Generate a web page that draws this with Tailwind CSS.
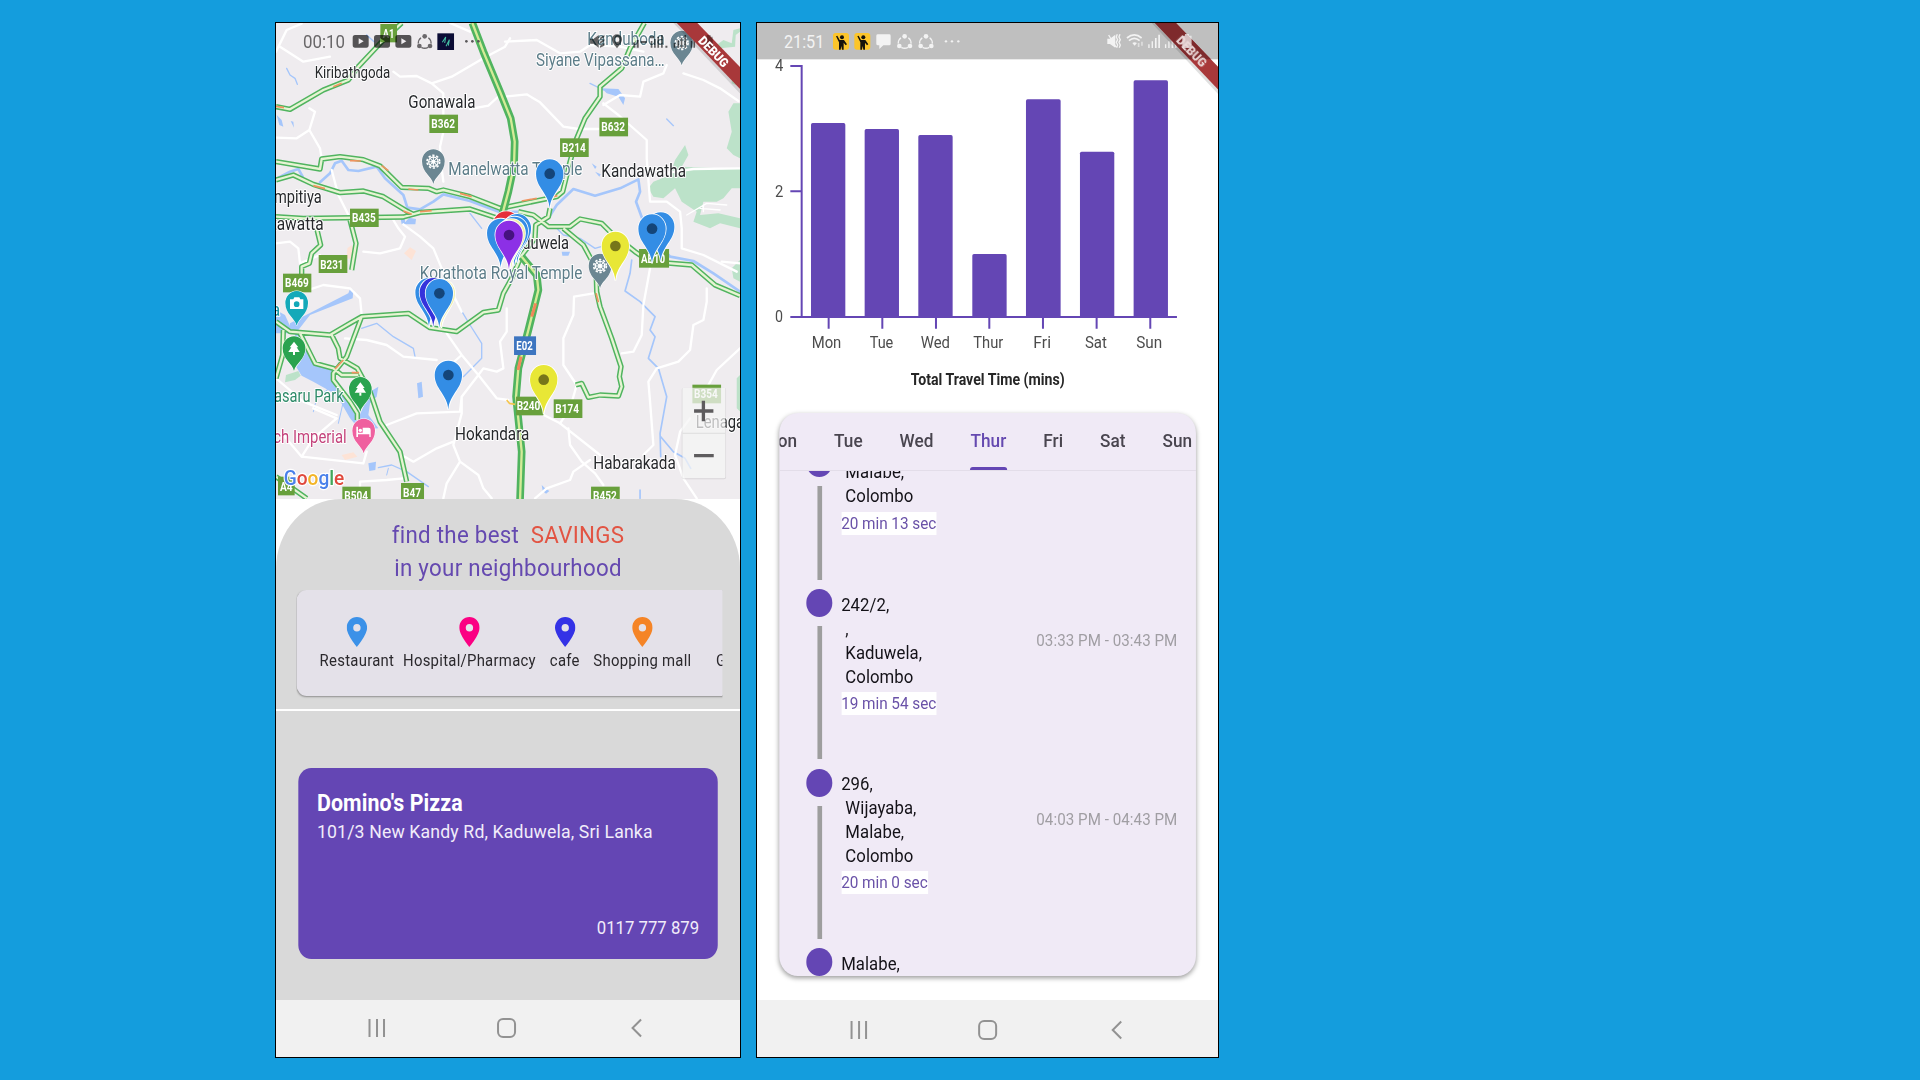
<!DOCTYPE html>
<html lang="en">
<head>
<meta charset="utf-8">
<title>Travel app screens</title>
<script src="https://cdn.jsdelivr.net/npm/@tailwindcss/browser@4"></script>
</head>
<body class="h-[1080px] w-[1920px] overflow-hidden bg-[#149ddd] font-[Roboto,sans-serif]">
<svg class="hidden">
  <defs>
    <path id="marker" d="M0 4C-3 -42 -41 -58 -41 -100A41 43 0 1 1 41 -100C41 -58 3 -42 0 4Z"/>
    <path id="poi" d="M0 0C-4 -22 -34 -34 -34 -68A34 36 0 1 1 34 -68C34 -34 4 -22 0 0Z"/>
    <g id="wheel" fill="none" stroke="#fff" stroke-width="4"><circle r="14"/><circle r="19" stroke-dasharray="7 5" stroke-width="5"/><circle r="4"/><path d="M-16 0H16M0 -16V16M-11 -11L11 11M-11 11L11 -11" stroke-width="3"/></g>
    <g id="tree" fill="#fff"><path d="M0 -23L13 -6H8L17 8H-17L-8 -6H-13Z"/><path d="M-3 8H3V17H-3Z"/></g>
    <path id="tube" fill-rule="evenodd" d="M7 0H41Q48 0 48 8V30Q48 38 41 38H7Q0 38 0 30V8Q0 0 7 0ZM18 10V28L33 19Z"/>
    <g id="share"><path d="M12 10A20 20 0 0 0 4 28M34 10A20 20 0 0 1 42 28M13 39A20 20 0 0 0 33 39" fill="none" stroke="currentColor" stroke-width="4"/><circle cx="23" cy="6" r="7" fill="currentColor"/><circle cx="7" cy="35" r="7" fill="currentColor"/><circle cx="39" cy="35" r="7" fill="currentColor"/></g>
    <path id="small-pin" fill-rule="evenodd" d="M10 0C4.500 0 0 4.700 0 10.500C0 18 10 30 10 30S20 18 20 10.500C20 4.700 15.500 0 10 0ZM10 7A3.600 3.800 0 1 1 10 14.600A3.600 3.800 0 1 1 10 7Z"/>
    <g id="yellow-app"><rect width="48" height="50" rx="8" fill="#fcc52b"/><circle cx="27" cy="13" r="6" fill="#15120c"/><path d="M9 10L13 8L20 21H33L42 34L38 37L32 29V50H27L25 39L23 50H18V28Z" fill="#15120c"/></g>
    <path id="roads" d="M395 24L340 75L265 155L235 195L160 225L60 283L18 275M18 440L150 462L155 432L210 425L280 434L330 453L395 517L475 520L500 530L520 525L600 545L690 580L860 545L878 530L900 440L920 370L945 310L990 245V215L1055 160L1080 100L1123 24M18 495L70 480L130 508L210 533L280 528L340 545L410 588L430 598M18 605L100 610L400 606L450 592L600 582L690 612M240 615L258 685L245 765M140 640L152 690L125 715L118 745L95 755V780M745 590L790 600L835 635L900 635L930 612L995 625L1025 655L1095 710L1140 740L1265 750L1335 810L1410 842M840 580L835 605L797 630L795 670L740 740M880 640L940 690L978 760L980 830L990 875L1025 970L1053 1055L1048 1085L1055 1115L1045 1143L990 1140L955 1147L935 1105L917 1110M18 920L60 950L180 960L240 925L275 905L415 895L480 938L560 950L640 892L685 885L700 835L725 790L755 720M275 905L230 1025L190 1075V1095L240 1160L262 1195V1215M185 960L205 1000L210 1030L262 1060L300 1130L330 1220L390 1310L410 1400M90 955L135 1045L190 1060L215 1080H265M40 945L38 1020L18 1090M18 1385L110 1450"/>
    <path id="motorway" d="M607 24L640 110L690 230L722 310L734 380L732 450L715 530L695 605M755 725L800 780L805 825L775 945L745 1060L738 1145L755 1310L750 1455"/>
  </defs>
</svg>
<main class="flex gap-[15px] pt-[22px] pl-[275px]">

<!-- Map screen -->
<section class="h-[1036px] w-[466px] shrink-0 overflow-hidden border border-black bg-white">
<div class="flex h-full w-[499px] origin-left scale-x-[.93] flex-col">
<svg class="block h-[476px] w-full shrink-0" viewBox="18 24 1392 1428" preserveAspectRatio="none">
  <rect x="18" y="24" width="1392" height="1428" fill="#efecef"/>
  <g fill="#bce2c9">
    <path d="M1375 290L1390 265H1410V430L1390 420L1370 400L1385 350Z"/>
    <path d="M1135 520L1150 500L1200 480L1215 435L1245 390L1255 420L1235 455L1410 462V520L1385 520L1360 550L1340 560L1300 560L1290 600L1345 595L1410 610V640L1350 625L1320 640L1270 620L1280 590L1235 560L1215 520L1180 550L1150 545Z"/>
    <path d="M1340 90L1360 75L1385 85L1390 45L1410 40V50L1397 60L1395 95L1350 100Z"/>
    <path d="M1385 190L1410 175V215L1385 205Z"/>
    <path d="M1385 760L1410 735V800L1390 790Z"/><path d="M1400 1090L1410 1080V1190L1400 1180Z"/>
    <path d="M48 1080L85 1068L92 1082L75 1095L45 1102Z"/>
  </g>
  <g fill="#fde3d6"><path d="M232 700L245 690L258 735L230 730Z"/><path d="M402 715L420 697L438 708L425 735Z"/><path d="M215 1320L250 1312L262 1325L225 1335Z"/></g>
  <g fill="#a5c6fb">
    <path d="M60 925L235 835L240 822L250 825L248 850L120 900L85 945L60 945Z"/>
    <path d="M18 885L45 900L70 955H18Z"/>
    <path d="M75 955L100 955L135 1045L200 1065L195 1090L245 1160L265 1210L300 1130L325 1115L320 1145L300 1165L295 1200L325 1240L270 1245L240 1210L200 1140L165 1120L130 1100L95 1082L72 1045Z"/>
    <path d="M441 1105L455 1100L459 1145L445 1150Z"/><path d="M295 1345L318 1340L316 1365L298 1368Z"/>
    <path d="M20 300L35 315L40 335L28 330ZM62 318L70 320L72 338ZM392 612L405 612V622L418 608L438 612L436 628L395 628Z"/>
    <path d="M875 710H900L895 722L877 722ZM815 1410L825 1420L838 1428L828 1436L818 1428ZM965 445L980 455L975 462ZM975 470L992 478L988 485ZM995 220L1045 222L1065 250L1060 270L1045 245L1010 235Z"/>
  </g>
  <g fill="none" stroke="#a5c6fb" stroke-linejoin="round" stroke-linecap="round">
    <path stroke-width="8" d="M18 492L60 470L85 462L98 485M150 502L180 475L195 445L215 437L235 465L265 468L320 455L345 490L400 540L412 578L450 583L490 560L520 538L600 558L690 592L760 590L810 615L835 610L860 570L910 522L975 542L1050 520L1105 493L1110 530L1098 560L1120 620L1160 680L1200 725L1270 738L1330 775L1410 830"/>
    <path stroke-width="4" d="M50 160L60 180L75 190L82 208M600 595L635 640M1190 312L1210 332M960 205L1000 225M860 640L880 660L930 670L975 700L1010 690M275 940L320 925L370 965L430 1000L435 1025M570 880L600 930L635 985V1030L580 1085M325 1358L365 1350L410 1370L475 1415M290 60L312 80"/>
    <path stroke-width="5" d="M1085 735L1080 775L1065 828L1110 860L1155 905L1140 945L1155 965L1135 1030L1165 1060L1190 1145L1170 1255L1172 1325M1172 1265L1210 1310L1245 1330L1262 1360M1110 1425V1450"/>
    <path stroke-width="3" d="M190 1110L140 1150L130 1190M220 1160L205 1225M350 1380L355 1360"/>
  </g>
  <g fill="none" stroke="#fff" stroke-width="7" stroke-linejoin="round" stroke-linecap="round">
    <path d="M18 110L50 45L95 26M30 95L100 140L180 125M370 170L390 185L440 183L485 205L545 185L640 130L705 95L720 70M485 205L520 235V300M520 350L510 395L515 460L520 500"/>
    <path d="M600 282L655 272L690 240M705 245L770 238L810 262L880 335L925 342L985 342M540 24L600 50M118 280L135 290L118 345L80 370L18 368M118 345L150 400L155 430"/>
    <path d="M185 465L205 540L240 610M370 615L385 640L405 665L390 700L330 715L280 710M400 628L450 665L490 700L515 760L530 800L575 890M18 685L60 680L85 700L90 745L150 720"/>
    <path d="M705 80L800 75L870 115L930 110L960 90L1050 95L1120 110M1000 270L1050 240L1110 245L1120 200L1180 175L1190 150M1000 265L1045 300L1130 375V430L1140 560L1190 560L1230 590L1235 640L1235 700L1300 720L1400 770M1240 175L1300 195L1350 220L1405 258M1180 475L1270 462L1410 460"/>
    <path d="M1410 745L1355 740M1310 820L1310 860L1300 915L1270 930L1260 1005L1225 1040L1160 1060L1135 1100L1140 1160L1150 1290L1120 1320M1140 760L1120 870L1115 960L1090 1010L1055 1015M970 835L912 845L910 900L880 970V1050L920 1110L900 1180L870 1225M1410 1000L1340 1065L1315 1110M1260 1210L1230 1250L1215 1320L1240 1390L1280 1450"/>
    <path d="M100 830L160 810L240 820L270 850L275 900M225 970L290 975L350 990L400 1025L500 1035M530 955L575 1020L625 1080L680 1150L715 1155M575 1020L530 1060M625 1080L640 1060L680 1070L700 1060L690 980L710 950V880M625 1080L575 1145L570 1190L440 1195L350 1230M575 1145V1195L550 1290L570 1340L625 1380L640 1420L665 1450M570 1340L530 1405L520 1450M550 1280L500 1300L430 1340L395 1320M130 1180L200 1210L130 1270L95 1325L280 1345L290 1310M270 1400L350 1395L400 1390M270 1400V1450M95 1325L40 1260M18 1090L100 1160L200 1200M821 1200L870 1225L990 1320M895 1240L900 1290L935 1340L975 1375L1000 1410M960 1335L910 1370L900 1395L830 1420L795 1450"/>
    <path stroke-width="4" d="M1250 600L1310 565L1370 570M1300 590V570M1290 580L1350 585"/>
  </g>

  <!-- Traffic roads: green casing, pale core, coloured traffic segments -->
  <g fill="none" stroke-linejoin="round">
    <use href="#roads" stroke="#50b45f" stroke-width="16"/>
    <use href="#roads" stroke="#e6f4d3" stroke-width="7"/>
    <use href="#motorway" stroke="#50b45f" stroke-width="23"/>
    <use href="#motorway" stroke="#d5eb98" stroke-width="7"/>
    <path stroke="#f2875b" stroke-width="9" d="M797 865L785 905M753 1025L744 1065"/>
    <path stroke="#f0935f" stroke-width="5" d="M240 437L272 438M335 452L355 467M415 522L445 525M570 535L605 545M755 558L800 550M840 548L862 542M130 512L165 521M400 588L425 598M450 590L485 587M978 835L985 862M195 1062L220 1035M245 1073L267 1073M190 215L215 205M18 274L42 278"/>
    <path stroke="#f5c64f" stroke-width="5" d="M710 1155L718 1165L735 1168"/>
  </g>

  <!-- Route badges -->
  <g fill="#68a03c">
    <rect x="331" y="27" width="50" height="55"/><rect x="478" y="299" width="86" height="55"/><rect x="988" y="308" width="86" height="56"/><rect x="870" y="370" width="86" height="56"/>
    <rect x="240" y="581" width="86" height="55"/><rect x="146" y="720" width="86" height="54"/><rect x="39" y="776" width="85" height="56"/><rect x="1107" y="702" width="90" height="56"/>
    <rect x="738" y="1145" width="82" height="56"/><rect x="851" y="1153" width="86" height="56"/><rect x="1267" y="1109" width="86" height="56"/>
    <rect x="24" y="1385" width="50" height="56"/><rect x="217" y="1415" width="85" height="40"/><rect x="393" y="1404" width="69" height="56"/><rect x="963" y="1415" width="86" height="40"/>
  </g>
  <rect x="732" y="964" width="66" height="56" fill="#3d75c0"/>
  <g fill="#fff" font-size="36" font-weight="700">
    <text x="338" y="68" textLength="35" lengthAdjust="spacingAndGlyphs">A1</text>
    <text x="484" y="339" textLength="71" lengthAdjust="spacingAndGlyphs">B362</text>
    <text x="994" y="349" textLength="71" lengthAdjust="spacingAndGlyphs">B632</text>
    <text x="876" y="410" textLength="71" lengthAdjust="spacingAndGlyphs">B214</text>
    <text x="246" y="621" textLength="71" lengthAdjust="spacingAndGlyphs">B435</text>
    <text x="151" y="761" textLength="69" lengthAdjust="spacingAndGlyphs">B231</text>
    <text x="45" y="817" textLength="71" lengthAdjust="spacingAndGlyphs">B469</text>
    <text x="1113" y="743" textLength="72" lengthAdjust="spacingAndGlyphs">AB10</text>
    <text x="740" y="1186" textLength="71" lengthAdjust="spacingAndGlyphs">B240</text>
    <text x="856" y="1194" textLength="71" lengthAdjust="spacingAndGlyphs">B174</text>
    <text x="1272" y="1150" textLength="71" lengthAdjust="spacingAndGlyphs">B354</text>
    <text x="30" y="1427" textLength="38" lengthAdjust="spacingAndGlyphs">A4</text>
    <text x="223" y="1456" textLength="71" lengthAdjust="spacingAndGlyphs">B504</text>
    <text x="399" y="1445" textLength="54" lengthAdjust="spacingAndGlyphs">B47</text>
    <text x="969" y="1456" textLength="71" lengthAdjust="spacingAndGlyphs">B452</text>
    <text x="739" y="1004" textLength="49" lengthAdjust="spacingAndGlyphs">E02</text>
  </g>

  <!-- Place names -->
  <g fill="#26282b" font-size="53" stroke="#fff" stroke-width="6" stroke-linejoin="round" paint-order="stroke">
    <text x="134" y="188" font-size="48" textLength="227" lengthAdjust="spacingAndGlyphs">Kiribathgoda</text>
    <text x="415" y="278" textLength="201" lengthAdjust="spacingAndGlyphs">Gonawala</text>
    <text x="994" y="485" textLength="254" lengthAdjust="spacingAndGlyphs">Kandawatha</text>
    <text x="12" y="564" textLength="143" lengthAdjust="spacingAndGlyphs">mpitiya</text>
    <text x="5" y="645" textLength="156" lengthAdjust="spacingAndGlyphs">tawatta</text>
    <text x="705" y="702" textLength="192" lengthAdjust="spacingAndGlyphs">Kaduwela</text>
    <text x="555" y="1275" textLength="223" lengthAdjust="spacingAndGlyphs">Hokandara</text>
    <text x="970" y="1363" textLength="247" lengthAdjust="spacingAndGlyphs">Habarakada</text>
    <text x="1277" y="1239" textLength="145" lengthAdjust="spacingAndGlyphs">Lenaga</text>
    <g fill="#5d7d89">
      <text x="535" y="479" textLength="402" lengthAdjust="spacingAndGlyphs">Manelwatta Temple</text>
      <text x="449" y="791" textLength="488" lengthAdjust="spacingAndGlyphs">Korathota Royal Temple</text>
      <text x="952" y="91" textLength="232" lengthAdjust="spacingAndGlyphs">Kanduboda</text>
      <text x="798" y="152" textLength="386" lengthAdjust="spacingAndGlyphs">Siyane Vipassana…</text>
    </g>
    <text x="12" y="1160" textLength="209" fill="#2d8a68" lengthAdjust="spacingAndGlyphs">asaru Park</text>
    <text x="2" y="902" fill="#1995a5">a</text>
    <text x="10" y="1284" textLength="220" fill="#c4447c" lengthAdjust="spacingAndGlyphs">ch Imperial</text>
  </g>

  <!-- Points of interest -->
  <g fill="#6b8692" stroke="#fff" stroke-width="3" paint-order="stroke">
    <use href="#poi" x="490" y="507"/><use href="#poi" x="1235" y="151"/><use href="#poi" x="990" y="820"/>
    <use href="#poi" x="80" y="932" fill="#14a9b9"/><use href="#poi" x="72" y="1068" fill="#2aa34f"/><use href="#poi" x="271" y="1190" fill="#2aa34f"/><use href="#poi" x="281" y="1315" fill="#ef609f"/>
  </g>
  <use href="#wheel" x="490" y="440"/><use href="#wheel" x="1235" y="84"/><use href="#wheel" x="990" y="753"/>
  <use href="#tree" x="72" y="1003"/><use href="#tree" x="271" y="1125"/>
  <path fill="#fff" fill-rule="evenodd" d="M60 853H70L73 847H88L91 853H100V882H60ZM80 859A8 8 0 1 0 80 876A8 8 0 1 0 80 859Z"/>
  <path fill="#fff" d="M259 1235H264V1253H278V1238H296Q302 1238 302 1245V1266H298V1258H264V1266H259Z"/><circle cx="271" cy="1246" r="5" fill="#fff"/>

  <!-- Result markers -->
  <g stroke="#fff" stroke-width="5" paint-order="stroke">
    <use href="#marker" x="1172" y="735" fill="#338de5"/><use href="#marker" x="1146" y="741" fill="#338de5"/>
    <use href="#marker" x="839" y="576" fill="#338de5"/><use href="#marker" x="1036" y="793" fill="#e8e736"/>
    <use href="#marker" x="709" y="732" fill="#e6303b"/><use href="#marker" x="692" y="754" fill="#338de5"/><use href="#marker" x="742" y="740" fill="#338de5"/><use href="#marker" x="733" y="748" fill="#338de5"/><use href="#marker" x="724" y="755" fill="#f1eda8"/><use href="#marker" x="717" y="760" fill="#8c30e6"/>
    <use href="#marker" x="477" y="932" fill="#338de5"/><use href="#marker" x="490" y="932" fill="#3532dc"/><use href="#marker" x="514" y="935" fill="#eff0ae"/><use href="#marker" x="508" y="935" fill="#338de5"/>
    <use href="#marker" x="535" y="1180" fill="#338de5"/><use href="#marker" x="821" y="1193" fill="#e8e736"/>
  </g>
  <g fill="#144579"><circle cx="1146" cy="641" r="16"/><circle cx="839" cy="476" r="16"/><circle cx="508" cy="835" r="16"/><circle cx="535" cy="1080" r="16"/><circle cx="1036" cy="693" r="16" fill="#77761a"/><circle cx="821" cy="1094" r="16" fill="#77761a"/><circle cx="717" cy="660" r="16" fill="#46127f"/></g>

  <!-- Zoom buttons -->
  <rect x="1235" y="1118" width="133" height="275" rx="6" fill="#00000018"/>
  <rect x="1237" y="1118" width="129" height="272" rx="4" fill="#fff" fill-opacity=".7"/>
  <path d="M1237 1255H1366" stroke="#ddd" stroke-width="3"/>
  <path d="M1272 1188H1330M1300 1157V1219M1272 1322H1331" stroke="#5e5c5e" stroke-width="10"/>

  <text x="41" y="1410" font-size="62" font-weight="500" textLength="182" lengthAdjust="spacingAndGlyphs" stroke="#fff" stroke-width="7" stroke-linejoin="round" paint-order="stroke"><tspan fill="#4a80ea">G</tspan><tspan fill="#e04a3e">o</tspan><tspan fill="#f3b528">o</tspan><tspan fill="#4a80ea">g</tspan><tspan fill="#41a65a">l</tspan><tspan fill="#e04a3e">e</tspan></text>

  <!-- Status bar -->
  <text x="99" y="100" font-size="54" textLength="126" lengthAdjust="spacingAndGlyphs" fill="#696769">00:10</text>
  <g fill="#000" fill-opacity=".65"><use href="#tube" x="248" y="60"/><use href="#tube" x="312" y="60"/><use href="#tube" x="376" y="60"/></g>
  <use href="#share" x="441" y="58" class="text-[#6b686b]"/>
  <rect x="502" y="55" width="50" height="50" fill="#0b0c35"/><path d="M517 82L527 66L524 84M528 94L538 74L535 92" fill="none" stroke="#45c3a6" stroke-width="3"/>
  <g fill="#5a585a"><circle cx="589" cy="79" r="4"/><circle cx="607" cy="79" r="4"/><circle cx="625" cy="79" r="4"/></g>
  <g fill="#000" fill-opacity=".6">
    <path d="M960 72H970L986 60V98L970 86H960ZM990 68L1003 60V66L990 74ZM990 80L1003 72V78L990 86ZM990 92L1003 84V92L990 98Z"/>
    <path fill-rule="evenodd" d="M1041 58A15 15 0 0 1 1056 73C1056 84 1041 100 1041 100S1026 84 1026 73A15 15 0 0 1 1041 58ZM1041 67A7 7 0 1 0 1041 81A7 7 0 1 0 1041 67Z"/>
    <path d="M1090 82H1096V98H1090ZM1100 75H1106V98H1100ZM1112 78H1130V84H1112ZM1140 64H1152V70H1140ZM1142 78H1147V98H1142ZM1152 72H1157V98H1152ZM1162 65H1167V98H1162ZM1173 60H1178V98H1173ZM1186 92H1192V98H1186ZM1211 84H1216V98H1211ZM1222 76H1227V98H1222ZM1232 68H1237V98H1232ZM1243 60H1248V98H1243ZM1262 78H1266V98H1262ZM1270 70H1275V98H1270Z"/>
  </g>
  <path d="M1210 24L1410 236V222L1220 24Z" fill="#000" opacity=".12"/>
  <path d="M1220 24H1282L1410 156V222Z" fill="#a8383a"/>
  <path d="M1304 65H1310V60H1322V65H1328V99H1304Z" fill="#000" fill-opacity=".35"/>
  <text transform="translate(1321 119) rotate(46)" text-anchor="middle" font-size="38" font-weight="900" fill="#fff" textLength="112" lengthAdjust="spacingAndGlyphs">DEBUG</text>
</svg>

<div class="h-[210px] shrink-0 rounded-t-[70px] bg-[#d9d9d9]">
  <div class="pt-[20px] text-center text-[24px] leading-[33.300px] tracking-[.3px] text-[#6549b0]">
    <p>find the best&nbsp; <span class="text-[#e25443]">SAVINGS</span></p>
    <p>in your neighbourhood</p>
  </div>
  <div class="mt-[4px] ml-[22px] w-[458px] overflow-hidden pb-2">
    <ul class="flex h-[106px] w-[620px] rounded-[11px] bg-[#e4e1e9] pt-[27px] pl-[25px] text-[16px] leading-5 tracking-[.3px] whitespace-nowrap text-[#2b292d] shadow-[0_1px_2px_rgba(0,0,0,.35)]">
      <li class="flex w-[80px] flex-col items-center gap-[4px]"><svg class="h-[30px] w-[22px] shrink-0" viewBox="0 0 20 30" preserveAspectRatio="none" fill="#3b91e8"><use href="#small-pin"/></svg>Restaurant</li>
      <li class="ml-[10px] flex w-[142px] flex-col items-center gap-[4px]"><svg class="h-[30px] w-[22px] shrink-0" viewBox="0 0 20 30" preserveAspectRatio="none" fill="#fb0083"><use href="#small-pin"/></svg>Hospital/Pharmacy</li>
      <li class="ml-[16px] flex w-[31px] flex-col items-center gap-[4px]"><svg class="h-[30px] w-[22px] shrink-0" viewBox="0 0 20 30" preserveAspectRatio="none" fill="#3432e6"><use href="#small-pin"/></svg>cafe</li>
      <li class="ml-[16px] flex w-[104px] flex-col items-center gap-[4px]"><svg class="h-[30px] w-[22px] shrink-0" viewBox="0 0 20 30" preserveAspectRatio="none" fill="#f58426"><use href="#small-pin"/></svg>Shopping mall</li>
      <li class="ml-[27px] pt-[34px]">Gym</li>
    </ul>
  </div>
</div>
<div class="h-[2px] shrink-0 bg-white"></div>
<div class="h-[289px] shrink-0 bg-[#d9d9d9] pt-[57px] pl-[24px]">
  <article class="flex h-[191px] w-[451px] flex-col rounded-[14px] bg-[#6446b4] px-[20px] pt-[22px] pb-[19px] text-white">
    <h2 class="text-[23px] leading-7 font-bold tracking-[.1px]">Domino's Pizza</h2>
    <p class="text-[19px] leading-7 tracking-[.15px] text-[#f1ecfa]">101/3 New Kandy Rd, Kaduwela, Sri Lanka</p>
    <p class="mt-auto text-right text-[18px] leading-6 text-[#f1ecfa]">0117 777 879</p>
  </article>
</div>
<svg class="block h-[57px] w-full shrink-0 bg-[#f1f1f1]" viewBox="276 1000 464 57" preserveAspectRatio="none" fill="none" stroke="#929292" stroke-width="2">
  <path d="M369.500 1019V1037M377 1019V1037M384 1019V1037"/><rect x="498" y="1019" width="17" height="18" rx="5"/><path d="M641 1019.500L632.500 1028L641 1036.500"/>
</svg>
</div>
</section>

<!-- Travel time screen -->
<section class="h-[1036px] w-[463px] shrink-0 overflow-hidden border border-black bg-white">
<div class="flex h-full w-[496px] origin-left scale-x-[.93] flex-col">
<svg class="block h-[374px] w-full shrink-0" viewBox="21 24 1384 1122" preserveAspectRatio="none">
  <rect x="21" y="24" width="1384" height="109" fill="#bfbfbf"/>
  <text x="102" y="100" font-size="54" textLength="121" lengthAdjust="spacingAndGlyphs" fill="#f3f3f3">21:51</text>
  <use href="#yellow-app" x="249" y="54"/><use href="#yellow-app" x="313" y="54"/>
  <path d="M384 58H418Q422 58 422 62V86Q422 91 418 91H400L388 102V91H384Q379 91 379 86V62Q379 58 384 58Z" fill="#f3f3f3"/>
  <use href="#share" x="441" y="58" class="text-[#f3f3f3]"/><use href="#share" x="505" y="58" class="text-[#f3f3f3]"/>
  <g fill="#f3f3f3"><circle cx="588" cy="79" r="3.500"/><circle cx="606" cy="79" r="3.500"/><circle cx="625" cy="79" r="3.500"/>
    <path d="M1072 71H1080L1096 59V98L1080 87H1072Z"/>
    <path d="M1195 88H1199V99H1195ZM1205 79H1209V99H1205ZM1215 69H1220V99H1215ZM1225 59H1230V99H1225ZM1245 88H1249V99H1245ZM1255 79H1259V99H1255ZM1265 69H1270V99H1265ZM1275 59H1280V99H1275Z"/>
    <path d="M1154 92L1147 84Q1154 79 1161 84Z"/></g>
  <path d="M1102 58L1099 66L1103 74L1099 82L1103 90L1100 98M1110 58L1107 66L1111 74L1107 82L1111 90L1108 98M1076 60L1098 96" fill="none" stroke="#f3f3f3" stroke-width="4"/>
  <path d="M1131 69Q1153 50 1175 69M1137 77Q1153 63 1169 77" fill="none" stroke="#f3f3f3" stroke-width="5"/><path d="M1166 84V96M1176 80V92" stroke="#dedede" stroke-width="5"/>
  <path d="M1205 24L1405 238V222L1215 24Z" fill="#000" opacity=".12"/>
  <path d="M1215 24H1278L1405 156V224Z" fill="#a8383a"/><path d="M1215 24H1278L1383 133H1319Z" fill="#7e2a2c"/>
  <path d="M1297 62H1305V57H1317V62H1325V99H1297Z" fill="#f3f3f3" opacity=".75"/>
  <text transform="translate(1315 119) rotate(46)" text-anchor="middle" font-size="38" font-weight="900" fill="#ead7d7" textLength="112" lengthAdjust="spacingAndGlyphs">DEBUG</text>

  <g fill="#6446b4">
    <rect x="183" y="324" width="103" height="582" rx="5"/><rect x="344" y="342" width="103" height="564" rx="5"/><rect x="505" y="360" width="103" height="546" rx="5"/><rect x="667" y="717" width="103" height="189" rx="5"/><rect x="828" y="253" width="104" height="653" rx="5"/><rect x="990" y="410" width="103" height="496" rx="5"/><rect x="1151" y="196" width="103" height="710" rx="5"/>
  </g>
  <path d="M121 153H155V906M121 529H155M121 906H1281M236 906V941M397 906V941M558 906V941M718 906V941M879 906V941M1040 906V941M1201 906V941" fill="none" stroke="#6446b4" stroke-width="6"/>
  <g font-size="49" fill="#4c4c4c">
    <text x="75" y="169" textLength="25" lengthAdjust="spacingAndGlyphs">4</text><text x="75" y="547" textLength="25" lengthAdjust="spacingAndGlyphs">2</text><text x="75" y="920" textLength="24" lengthAdjust="spacingAndGlyphs">0</text>
    <text x="185" y="1000" textLength="89" lengthAdjust="spacingAndGlyphs">Mon</text><text x="359" y="1000" textLength="71" lengthAdjust="spacingAndGlyphs">Tue</text><text x="512" y="1000" textLength="88" lengthAdjust="spacingAndGlyphs">Wed</text><text x="670" y="1000" textLength="90" lengthAdjust="spacingAndGlyphs">Thur</text><text x="850" y="1000" textLength="53" lengthAdjust="spacingAndGlyphs">Fri</text><text x="1005" y="1000" textLength="66" lengthAdjust="spacingAndGlyphs">Sat</text><text x="1159" y="1000" textLength="78" lengthAdjust="spacingAndGlyphs">Sun</text>
  </g>
  <text x="482" y="1110" font-size="47" font-weight="700" fill="#262626" textLength="462" lengthAdjust="spacingAndGlyphs">Total Travel Time (mins)</text>
</svg>

<div class="mt-[16px] ml-[24px] h-[563px] w-[448px] shrink-0 overflow-hidden rounded-[20px] bg-[#f0eaf6] shadow-[0_2px_5px_rgba(0,0,0,.4)]">
  <nav class="flex h-[58px] gap-[39.500px] overflow-hidden border-b border-[#e3dde9] pt-[14px] text-[18.500px] leading-7 font-medium tracking-[.1px] whitespace-nowrap text-[#49454f]">
    <span class="-ml-[18px]">Mon</span><span>Tue</span><span>Wed</span>
    <span class="flex flex-col justify-between text-[#6549b0]">Thur<i class="-mr-[1px] h-[3px] rounded-t-full bg-[#6446b4]"></i></span>
    <span>Fri</span><span>Sat</span><span>Sun</span>
  </nav>
  <ol class="-mt-[22px] text-[18px] leading-6 tracking-[.05px] text-[#141218] [clip-path:inset(22px_0_0_0)]">
    <li class="flex h-[140px]">
      <div class="ml-[29px] flex w-[28px] flex-col items-center gap-[9px]"><b class="size-[28px] shrink-0 rounded-full bg-[#6446b4]"></b><i class="h-[94px] w-[5px] bg-[#9e9e9e]"></i></div>
      <div class="ml-[9.500px] pt-[11px]"><p class="whitespace-pre"> Malabe,
 Colombo</p><p class="mt-[4px] inline-block h-[23px] bg-white text-[16.500px] leading-[23px] tracking-[-.05px] text-[#6a52a8]">20 min 13 sec</p></div>
    </li>
    <li class="flex h-[179.500px]">
      <div class="ml-[29px] flex w-[28px] flex-col items-center gap-[9px]"><b class="size-[28px] shrink-0 rounded-full bg-[#6446b4]"></b><i class="h-[133px] w-[5px] bg-[#9e9e9e]"></i></div>
      <div class="ml-[9.500px] flex-1 pt-[4px]"><p class="whitespace-pre">242/2,
 ,
 Kaduwela,
 Colombo</p><p class="mt-[3px] inline-block h-[23px] bg-white text-[16.500px] leading-[23px] tracking-[-.05px] text-[#6a52a8]">19 min 54 sec</p></div>
      <time class="mt-[39.500px] mr-[20px] text-[16.300px] text-[#a09ea3]">03:33 PM - 03:43 PM</time>
    </li>
    <li class="flex h-[179.500px]">
      <div class="ml-[29px] flex w-[28px] flex-col items-center gap-[9px]"><b class="size-[28px] shrink-0 rounded-full bg-[#6446b4]"></b><i class="h-[133px] w-[5px] bg-[#9e9e9e]"></i></div>
      <div class="ml-[9.500px] flex-1 pt-[3.500px]"><p class="whitespace-pre">296,
 Wijayaba,
 Malabe,
 Colombo</p><p class="mt-[3px] inline-block h-[23px] bg-white text-[16.500px] leading-[23px] tracking-[-.05px] text-[#6a52a8]">20 min 0 sec</p></div>
      <time class="mt-[39.500px] mr-[20px] text-[16.300px] text-[#a09ea3]">04:03 PM - 04:43 PM</time>
    </li>
    <li class="flex h-[28px]">
      <b class="ml-[29px] size-[28px] shrink-0 rounded-full bg-[#6446b4]"></b><p class="ml-[9.500px] pt-[4px]">Malabe,</p>
    </li>
  </ol>
</div>
<svg class="mt-auto block h-[57px] w-full shrink-0 bg-[#f1f1f1]" viewBox="757 1000 461 57" preserveAspectRatio="none" fill="none" stroke="#929292" stroke-width="2">
  <path d="M851.500 1021V1039M859 1021V1039M866 1021V1039"/><rect x="979" y="1021" width="17" height="18" rx="5"/><path d="M1121 1021.500L1112.500 1030L1121 1038.500"/>
</svg>
</div>
</section>
</main>
</body>
</html>
